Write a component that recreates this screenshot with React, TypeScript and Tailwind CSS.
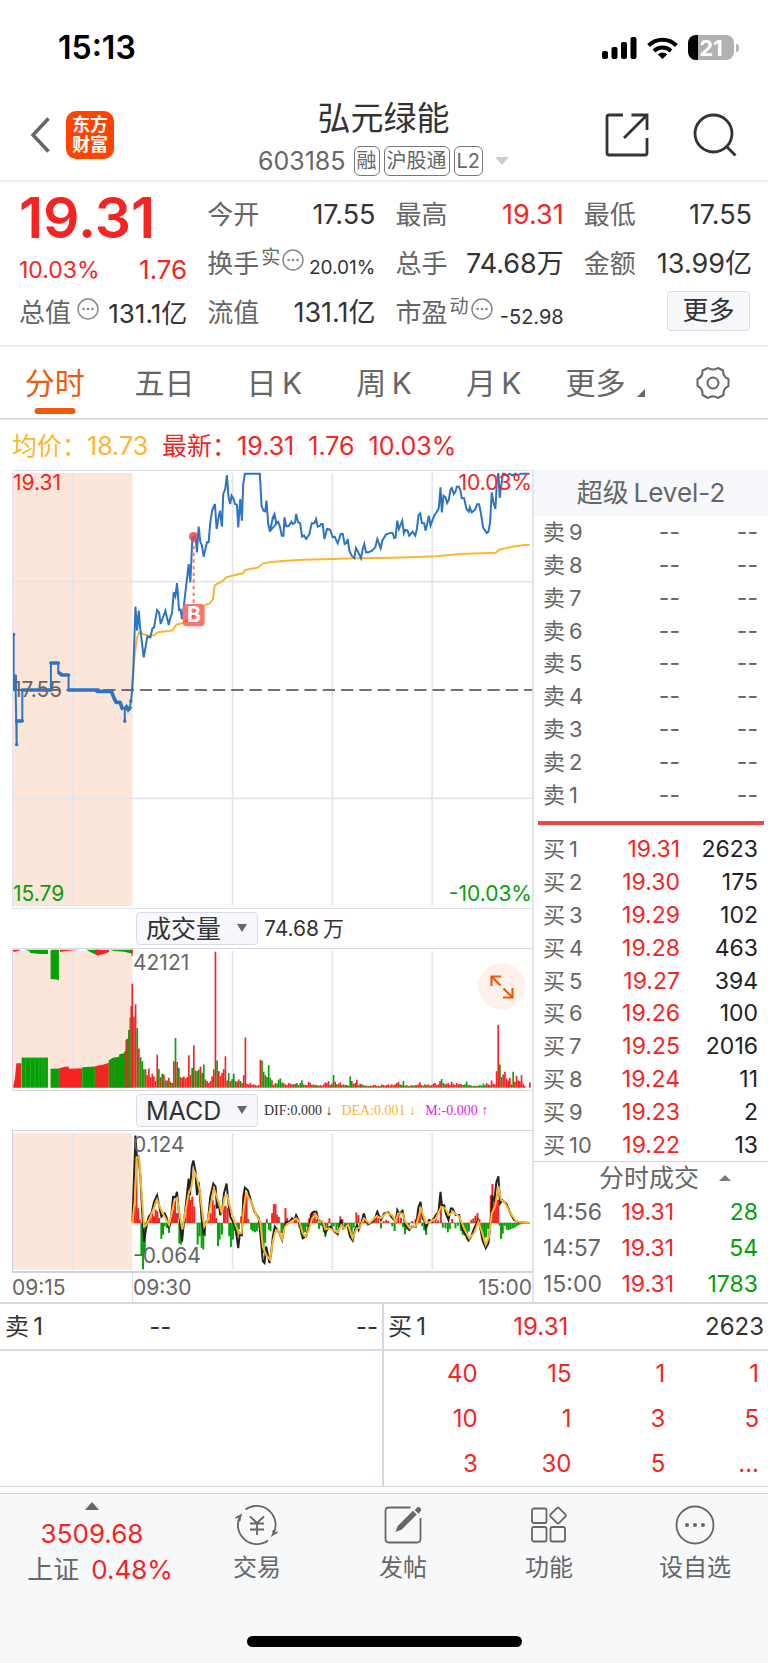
import type { ReactNode } from "react";
import clsx from "clsx";

const stats = [
  { label: "今开", value: "17.55" },
  { label: "最高", value: "19.31", up: true },
  { label: "最低", value: "17.55" },
];

const tabs = ["分时", "五日", "日\u2009K", "周\u2009K", "月\u2009K"];

const sells = [9, 8, 7, 6, 5, 4, 3, 2, 1];

const buys = [
  ["19.31", "2623"],
  ["19.30", "175"],
  ["19.29", "102"],
  ["19.28", "463"],
  ["19.27", "394"],
  ["19.26", "100"],
  ["19.25", "2016"],
  ["19.24", "11"],
  ["19.23", "2"],
  ["19.22", "13"],
];

const ticks = [
  ["14:56", "19.31", "28"],
  ["14:57", "19.31", "54"],
  ["15:00", "19.31", "1783"],
];

const queue = [
  ["40", "15", "1", "1"],
  ["10", "1", "3", "5"],
  ["3", "30", "5", "..."],
];

// all charts share a 1560 unit wide canvas, three units to a pixel
const preOpenLine =
  "2,489 2,659 8,614 8,659 11,820 11,750 28,750 28,657 114,657 114,576 136,576 136,605 145,612 167,612 167,657 256,657 256,661 296,663 301,677 309,694 321,694 327,711 336,711 336,750 336,711 341,704 346,719 351,709 355,689 358,657";

const priceLine =
  "358,657 361,609 364,529 368,407 373,479 378,419 382,469 393,559 404,496 413,499 419,472 424,469 433,417 439,424 444,459 458,419 468,462 473,439 478,427 483,364 488,376 493,336 499,417 504,416 508,444 513,409 528,279 533,334 539,204 543,197 549,201 553,244 558,167 563,212 568,224 573,257 583,214 588,214 593,154 599,117 607,99 612,174 618,139 622,119 628,167 632,69 638,54 643,12 648,79 653,99 657,74 663,84 667,99 673,101 677,169 683,84 688,149 692,39 697,8 742,8 747,104 753,119 758,121 762,89 767,159 772,181 779,149 786,131 792,156 797,152 " +
  "771,182 776,164 781,139 786,129 791,154 797,152 802,166 808,194 813,194 816,139 821,166 828,166 837,152 841,159 848,154 851,129 857,154 863,156 869,197 875,194 881,204 891,189 898,157 906,157 911,144 916,167 923,164 926,159 931,159 936,204 944,174 953,176 961,199 967,197 976,217 985,189 991,189 997,219 1002,216 1006,204 1011,239 1018,254 1026,261 1031,231 1038,244 1046,262 1051,234 1056,219 1061,244 1069,244 1079,239 1089,229 1095,204 1105,232 1110,209 1121,191 1136,185 1141,186 1146,201 1150,199 1155,149 1160,174 1170,149 1175,187 1179,177 1186,179 1191,194 1201,182 1209,194 1214,174 1219,132 1224,127 1229,156 1236,157 1240,179 1245,159 1250,134 1255,164 1266,134 1278,116 1280,109 1285,49 1289,124 1294,74 1300,79 1305,96 1310,86 1315,56 1319,51 1325,69 1330,62 1334,47 1340,47 1345,59 1349,82 1356,82 1363,114 1370,122 1373,109 1379,124 1389,116 1395,100 1401,100 1406,124 1413,169 1424,186 1429,182 1434,154 1439,64 1444,94 1450,114 1455,24 1459,6 1463,81 1468,39 1473,8 1478,8 1485,14 1492,8 1501,13 1511,8 1518,13 1525,8 1553,8";

const averageLine =
  "358,657 361,609 366,549 373,499 379,484 391,489 406,494 426,492 434,484 446,482 478,479 491,461 511,456 526,447 541,434 551,414 566,406 591,397 601,384 606,344 616,337 629,331 641,319 658,314 691,307 698,297 736,290 751,277 771,274 811,270 871,266 961,264 1031,262 1141,260 1271,256 1291,254 1341,249 1451,245 1461,236 1501,227 1536,222 1553,222";

const difLine =
  "359,274 368,14 373,89 377,74 383,139 388,239 394,334 401,289 408,259 416,249 424,214 433,194 439,224 446,259 456,249 461,259 469,294 474,274 481,199 488,201 493,184 498,239 508,334 513,284 521,209 528,144 532,194 537,109 542,89 548,119 553,194 558,154 563,209 568,279 573,314 578,279 586,269 593,199 602,159 609,169 613,234 618,214 623,254 629,239 634,189 642,159 648,219 653,259 661,274 669,294 677,354 682,309 688,314 692,199 697,171 706,179 716,214 726,244 739,264 746,339 751,394 756,399 761,349 771,399 " +
  "776,369 781,319 787,289 795,299 801,309 809,329 815,289 821,274 831,274 839,264 846,269 851,254 858,269 864,294 871,324 881,319 889,289 898,249 904,244 912,244 918,269 929,274 939,309 946,294 954,289 966,304 976,312 986,269 993,294 1005,284 1013,319 1021,331 1028,299 1034,284 1039,299 1047,279 1055,249 1061,274 1071,281 1086,269 1095,244 1106,269 1116,249 1128,246 1141,264 1151,274 1155,239 1161,251 1171,241 1179,284 1191,299 1199,289 1211,289 1219,229 1225,214 1231,264 1236,269 1241,294 1251,269 1259,274 1271,254 1279,244 1285,184 1289,224 1296,224 1301,249 1309,269 1316,234 1321,234 1331,254 1341,254 1351,299 1361,314 1369,331 1377,319 1386,294 1398,269 1403,284 1411,329 1421,354 1429,339 1436,269 1441,199 1447,209 1453,154 1459,137 1464,219 1471,209 1483,219 1493,244 1506,269 1521,276 1553,278";

const deaLine =
  "359,277 366,209 372,79 379,79 386,179 394,289 401,284 411,264 423,234 433,207 443,234 453,254 469,284 476,254 485,209 493,202 501,254 509,297 517,249 528,189 536,169 544,121 553,144 561,179 568,239 575,289 586,269 594,224 604,174 611,194 619,219 628,249 636,199 644,194 651,224 659,254 669,284 679,309 687,309 694,229 701,189 716,214 731,254 743,274 751,349 761,374 773,389 " +
  "779,344 787,309 796,297 809,327 817,289 831,277 851,264 861,274 871,309 879,319 889,299 899,264 911,254 921,269 931,274 939,297 951,294 976,307 987,284 996,294 1007,284 1021,324 1033,294 1041,294 1055,264 1071,279 1093,257 1106,264 1123,247 1139,254 1151,274 1157,249 1171,249 1179,274 1193,294 1211,287 1226,234 1241,279 1256,274 1271,264 1287,229 1299,234 1311,254 1323,244 1341,259 1356,294 1371,324 1386,309 1399,274 1409,304 1421,344 1431,319 1439,249 1449,229 1459,167 1467,209 1477,214 1493,244 1511,271 1526,276 1553,278";

// [x, height], above zero is red and below is green
const macdBars = [
  [366, 50], [371, 200], [376, 45], [381, 10], [386, -100], [391, -140], [396, -90], [401, -15], [408, 6], [413, 15],
  [419, 30], [424, 20], [429, 40], [434, 35], [439, 15], [446, -48], [451, -35], [456, -10], [463, -15], [469, -30],
  [481, 40], [487, 68], [493, 30], [500, -62], [505, -65], [510, -25], [518, 15], [524, 60], [529, 85], [534, 70],
  [539, 80], [545, 50], [555, -65], [561, -40], [567, -75], [572, -80], [577, -40], [588, 10], [594, 30], [600, 70],
  [606, 55], [611, 15], [616, -70], [621, -50], [628, -35], [634, 50], [639, 52], [645, 45], [650, -40], [655, -72],
  [661, -50], [667, -25], [673, -38], [679, -20], [686, 20], [692, 50], [697, 90], [702, 82], [707, 12], [716, -20],
  [721, -25], [727, -28], [733, -25], [741, -15], [747, -50], [753, -90], [758, -60], [763, 12], [769, -20], [774, -24],
  [779, 30], [784, 57], [789, 57], [794, 25], [799, 18], [807, -30], [812, -20], [819, 45], [824, 15], [831, 6],
  [846, 12], [851, 18], [861, -14], [867, -36], [872, -42], [878, -28], [884, -12], [890, 14], [895, 28], [901, 34],
  [907, 28], [913, 10], [920, -18], [926, -8], [934, -28], [939, -42], [945, -14], [951, 14], [958, -14], [964, -10],
  [972, -22], [978, -12], [984, 20], [990, 12], [998, -14], [1005, -8], [1012, -34], [1018, -38], [1024, -14], [1032, 32],
  [1038, 24], [1044, -8], [1052, 26], [1058, 18], [1066, -8], [1078, 4], [1086, 16], [1092, 26], [1098, 14], [1106, -16],
  [1114, 6], [1122, 10], [1128, 6], [1140, -10], [1147, -24], [1153, 24], [1158, 34], [1166, 16], [1172, -12], [1178, -34],
  [1184, -20], [1190, -12], [1200, 6], [1210, 12], [1217, 40], [1223, 30], [1230, -10], [1236, -22], [1242, -36], [1250, 10],
  [1262, 14], [1270, 16], [1278, 8], [1286, 62], [1292, -14], [1300, -16], [1307, -28], [1313, -18], [1320, 12], [1330, -16],
  [1338, -8], [1346, -24], [1352, -36], [1358, -38], [1364, -50], [1370, -26], [1378, 10], [1384, 14], [1390, 22], [1396, 30],
  [1402, 12], [1410, -30], [1416, -50], [1422, -44], [1428, -18], [1436, 84], [1441, 118], [1446, 80], [1452, 84], [1458, 70],
  [1463, -8], [1467, -48], [1472, -32], [1478, -8], [1484, -20], [1490, -22], [1496, -18], [1502, -16], [1508, -14], [1514, -10],
  [1520, -6], [1528, -4],
];

// one bar per minute, negative values are drawn green
const volumes = [
  314, 215, 252, -180, 118, -92, -80, -56, 56, 38, 58, 32, 42, 34, 20, 100, -56, 32, -42, 40, 22, -22, 30, -18, 14, 80,
  -150, 78, -60, 32, 30, 34, 28, 32, 98, 38, -60, 128, 52, -50, -55, 64, -45, -70, 25, 20, 14, 20, 34, 55, 411, -82, 50,
  35, 45, 56, 95, 22, -44, 20, -26, -42, -20, 18, 25, -20, 14, 38, 152, 12, 10, 14, 8, 10, 8, 6, 8, 84, -82, -48, 38,
  -32, -68, -30, 22, 8, 14, -12, -24, -28, 16, -14, 10, 8, 14, 12, -10, 10, 12, -14, 8, -14, -22, 10, -8, 8, 18, 14, -8,
  10, -8, 8, -6, 8, 6, 10, 16, 14, 20, -8, 12, -38, 18, -10, 12, 16, -8, 10, -8, 8, -6, -34, 20, -12, 14, 24, -8, 12,
  -10, 8, -6, 6, -5, 6, 5, 8, 8, 5, 6, -5, 10, 8, 6, 8, 10, 6, 10, 8, 10, 14, 18, -10, 8, -20, -6, 8, -5, 6, -8, 6, -8,
  8, 10, 16, -8, 6, -10, 8, 10, -6, 8, 12, 14, 8, 10, 20, -26, 14, -10, 12, 14, 8, 18, 12, 8, 14, 10, 12, -10, 8, -10,
  -18, 8, -8, 6, -5, -6, 5, -6, -8, -6, -12, -8, 14, 10, -8, 22, 12, 10, 50, 190, -70, 32, 40, 48, 28, 22, 30, 10, -48,
  18, 36, 22, 20, 38, 12, 5, 0, 0, 16,
];

const preOpenVolume = [
  { color: "#f52423", points: "1,419 1,412 6,390 10,345 25,345 25,419" },
  { color: "#04a007", points: "26,419 26,328 105,328 105,419" },
  { color: "#04a007", points: "113,419 113,362 138,361 138,419" },
  { color: "#f52423", points: "138,419 138,361 155,356 168,355 168,362 208,360 208,419" },
  { color: "#04a007", points: "208,419 208,357 246,355 246,419" },
  { color: "#f52423", points: "246,419 246,354 270,350 288,344 288,419" },
  { color: "#04a007", points: "288,419 288,336 302,328 318,326 320,318 332,316 338,306 338,275 346,270 346,245 350,245 350,209 354,205 354,419" },
  { color: "#f52423", points: "340,419 340,276 344,276 344,419" },
  { color: "#f52423", points: "353,419 353,174 358,170 358,419" },
];

const preOpenTop = [
  { color: "#f52423", points: "1,2 1,9 16,6 24,2" },
  { color: "#04a007", points: "34,2 50,7 52,12 80,15 105,15 105,2" },
  { color: "#04a007", points: "113,2 113,91 132,92 138,95 138,2" },
  { color: "#f52423", points: "141,2 141,9 160,6 185,4 200,2" },
  { color: "#04a007", points: "220,2 232,9 250,17 258,21 258,2" },
  { color: "#f52423", points: "248,2 248,16 258,19 280,13 288,9 290,2" },
  { color: "#04a007", points: "290,2 305,6 335,8 352,13 358,12 358,2" },
  { color: "#f52423", points: "353,2 355,12 357,22 359,22 361,2" },
];

function ChartCanvas({ height, children }: { height: number; children: ReactNode }) {
  return (
    <svg
      className="block h-full w-full"
      viewBox={`0 0 1560 ${height}`}
      preserveAspectRatio="none"
      aria-hidden="true"
    >
      {children}
    </svg>
  );
}

function Grid({ top, bottom }: { top: number; bottom: number }) {
  return (
    <>
      {[180, 660, 960, 1260].map((x) => (
        <line key={x} x1={x} x2={x} y1={top} y2={bottom} stroke="#e2e5ec" strokeWidth="5" />
      ))}
    </>
  );
}

function PriceChart() {
  return (
    <div className="relative h-[439px] border-y border-l border-[#dfe2ea] text-[21px] leading-6">
      <ChartCanvas height={1311}>
        <rect x="0" y="6" width="359" height="1299" fill="#fce6da" />
        <Grid top={6} bottom={1305} />
        <line x1="0" x2="1560" y1="332" y2="332" stroke="#e2e5ec" strokeWidth="5" />
        <line x1="0" x2="1560" y1="982" y2="982" stroke="#e2e5ec" strokeWidth="5" />
        <line x1="-4" x2="1560" y1="657" y2="657" stroke="#444" strokeWidth="4" strokeDasharray="37 18" />
        <polyline points={averageLine} fill="none" stroke="#fdb52d" strokeWidth="6" />
        <polyline points={preOpenLine} fill="none" stroke="#2e74c4" strokeWidth="6" />
        <path
          d="M28 657H114M114 576H136M139 606L147 612H167M167 657H256M252 661H296L303 680L310 694H322L328 712M341 708L346 716L352 710"
          fill="none"
          stroke="#2e74c4"
          strokeWidth="11"
          strokeLinecap="round"
          strokeLinejoin="round"
        />
        <path
          d="M11 750H28M11 820v1M336 750v1M7 615v40M2 490v1M354 690v1M358 657v1"
          stroke="#2e74c4"
          strokeWidth="10"
          strokeLinecap="round"
        />
        <polyline points={priceLine} fill="none" stroke="#2e74c4" strokeWidth="6" />
        <line x1="543" x2="543" y1="205" y2="398" stroke="#fb7468" strokeWidth="6" strokeDasharray="10 10" />
        <circle cx="543" cy="197" r="14" fill="#e0474c" fillOpacity="0.85" />
        <rect x="510" y="399" width="66" height="67" rx="12" fill="#ff7368" />
        <path d="M516 452L530 446L543 434L551 416L560 410" fill="none" stroke="#fb5224" strokeWidth="6" />
      </ChartCanvas>
      <span className="absolute top-[132px] left-[181px] -translate-x-1/2 font-bold text-white">B</span>
      <span className="absolute top-0 left-0 text-[#f52423]">19.31</span>
      <span className="absolute top-0 right-0 text-[#f52423]">10.03%</span>
      <span className="absolute top-[207px] left-0 text-[#666]">17.55</span>
      <span className="absolute bottom-0.5 left-0 text-[#04a007]">15.79</span>
      <span className="absolute right-0 bottom-0.5 text-[#04a007]">-10.03%</span>
    </div>
  );
}

function VolumeChart() {
  return (
    <div className="relative h-[143px] border-y border-l border-[#d5d8e0]">
      <ChartCanvas height={426}>
        <rect x="0" y="6" width="359" height="413" fill="#fce6da" />
        <Grid top={6} bottom={419} />
        {preOpenTop.map((area) => (
          <polygon key={area.points} points={area.points} fill={area.color} />
        ))}
        {preOpenVolume.map((area) => (
          <polygon key={area.points} points={area.points} fill={area.color} />
        ))}
        <path
          d="M38 330v89M52 330v89M66 330v89M78 330v89M88 330v89M96 330v89"
          stroke="#7cc45e"
          strokeWidth="1"
        />
        <path d="M248 358v61M256 358v61M306 334v85M320 322v97M334 318v101" stroke="#b0521c" strokeWidth="2" />
        {volumes.map((volume, i) => (
          <rect
            key={i}
            x={356 + i * 5}
            y={419 - Math.abs(volume)}
            width="5"
            height={Math.abs(volume)}
            fill={volume > 0 ? "#f52423" : "#04a007"}
          />
        ))}
      </ChartCanvas>
      <span className="absolute top-0.5 left-[120px] text-[21px] leading-6 text-[#666]">42121</span>
      <button
        className="absolute top-[14px] right-[7px] flex size-[47px] items-center justify-center rounded-full bg-[#fef1eb]"
        aria-label="放大"
      >
        <svg className="size-6" viewBox="0 0 24 24" fill="none" stroke="#ee5a0a" strokeWidth="2.2">
          <path d="M11 1.5H1.5V11M1.5 1.5L10.5 10.5M13 22.5H22.5V13M22.5 22.5L13.5 13.5" />
        </svg>
      </button>
    </div>
  );
}

function MacdChart() {
  return (
    <div className="relative h-[143px] border-t border-b-2 border-l border-[#d0d3da] text-[21px] leading-6 text-[#666]">
      <ChartCanvas height={423}>
        <rect x="0" y="6" width="359" height="413" fill="#fce6da" />
        <Grid top={6} bottom={419} />
        {macdBars.map(([x, h]) => (
          <rect
            key={x}
            x={x - 3}
            y={h > 0 ? 278 - h : 278}
            width="6"
            height={Math.abs(h)}
            fill={h > 0 ? "#f52423" : "#04a007"}
          />
        ))}
        <path d="M359 278H1530" stroke="#d33a1c" strokeWidth="2" strokeDasharray="30 22" />
        <path d="M389 278H1530" stroke="#04a007" strokeWidth="2" strokeDasharray="22 30" />
        <polyline points={difLine} fill="none" stroke="#222" strokeWidth="6" />
        <polyline points={deaLine} fill="none" stroke="#fdb52d" strokeWidth="6" />
      </ChartCanvas>
      <span className="absolute top-0.5 left-[120px]">0.124</span>
      <span className="absolute bottom-[3px] left-[120px]">-0.064</span>
    </div>
  );
}

function IndicatorSelect({ label, value }: { label: string; value: string }) {
  return (
    <div className="relative ml-[124px] w-[122px] shrink-0">
      <select
        aria-label={label}
        className="block h-[33px] w-full appearance-none rounded-sm border border-[#d9dce4] bg-[#f7f8fb] pl-[9px] text-[25px] leading-7 text-[#333]"
      >
        <option>{value}</option>
      </select>
      <svg className="pointer-events-none absolute top-3 right-[11px] h-2 w-[10px]" viewBox="0 0 10 8" fill="#666">
        <path d="M0 0h10L5 8z" />
      </svg>
    </div>
  );
}

function InfoDots() {
  return (
    <svg className="size-[22px] shrink-0" viewBox="0 0 22 22" fill="none" stroke="#888" strokeWidth="1.5">
      <circle cx="11" cy="11" r="10" />
      <g fill="#888" stroke="none">
        <circle cx="6.5" cy="11" r="1.3" />
        <circle cx="11" cy="11" r="1.3" />
        <circle cx="15.5" cy="11" r="1.3" />
      </g>
    </svg>
  );
}

function StatusBar() {
  return (
    <div className="flex h-[75px] items-center justify-between pt-5 pr-[29px] pl-[58px]">
      <span className="text-[32px] leading-9 font-semibold text-black">15:13</span>
      <div className="flex items-center gap-[10px]">
        <svg className="h-[23px] w-9" viewBox="0 0 36 23">
          <rect x="1" y="15" width="6" height="8" rx="2" />
          <rect x="10.5" y="11" width="6" height="12" rx="2" />
          <rect x="20" y="6" width="6" height="17" rx="2" />
          <rect x="29.5" y="1" width="6" height="22" rx="2" />
        </svg>
        <svg className="h-[23px] w-[31px]" viewBox="0 0 31 23" fill="none" stroke="#000" strokeWidth="4">
          <path d="M1.6 9.5A19.5 19.5 0 0 1 29.4 9.5" />
          <path d="M7 15A12 12 0 0 1 24 15" />
          <path d="M10.8 18.5A6.5 6.5 0 0 1 20.2 18.5L15.5 23z" fill="#000" stroke="none" />
        </svg>
        <div className="flex items-center gap-0.5">
          <div className="flex h-[25px] w-[46px] items-center justify-center rounded-lg bg-linear-to-r from-black from-22% to-[#b1b1b1] to-22% text-[22px] leading-6 font-bold text-white">
            21
          </div>
          <div className="h-2 w-[3px] rounded-r-full bg-[#b1b1b1]" />
        </div>
      </div>
    </div>
  );
}

function Header() {
  return (
    <header className="grid h-[107px] grid-cols-[1fr_auto_1fr] items-center border-b-2 border-[#ededee] pt-[14px] pr-[31px] pl-[30px]">
      <div className="flex items-center gap-4">
        <button aria-label="返回">
          <svg className="block h-9 w-5" viewBox="0 0 20 36" fill="none" stroke="#666" strokeWidth="3.5">
            <path d="M18.5 1.5L3 18L18.5 34.5" />
          </svg>
        </button>
        <a
          href="#"
          className="flex size-12 flex-col items-center justify-center rounded-[10px] bg-[#ff4400] text-lg leading-5 font-bold text-white"
        >
          <span>东方</span>
          <span>财富</span>
        </a>
      </div>
      <div className="flex flex-col items-center gap-[10px] pt-1.5">
        <h1 className="text-[33px] leading-9 text-[#333]">弘元绿能</h1>
        <div className="flex items-center text-[#666]">
          <span className="mr-2 text-[25px] leading-7">603185</span>
          <div className="flex gap-1 text-xl leading-7">
            <span className="rounded-md border border-[#777] px-0.5">融</span>
            <span className="rounded-md border border-[#777] px-0.5">沪股通</span>
            <span className="rounded-md border border-[#777] px-0.5">L2</span>
          </div>
          <svg className="ml-3 h-2 w-[14px]" viewBox="0 0 14 8" fill="#ccc">
            <path d="M0 0h14L7 8z" />
          </svg>
        </div>
      </div>
      <div className="flex items-center justify-end gap-11">
        <button aria-label="分享">
          <svg className="block size-11" viewBox="0 0 44 44" fill="none" stroke="#333" strokeWidth="2.8">
            <path d="M18 2H4Q2 2 2 4V40Q2 42 4 42H40Q42 42 42 40V25M26.5 2H42V17M42 2L19 25" />
          </svg>
        </button>
        <button aria-label="搜索">
          <svg className="block size-11" viewBox="0 0 44 44" fill="none" stroke="#333" strokeWidth="2.8">
            <circle cx="20.5" cy="20.5" r="18.5" />
            <path d="M33 33L42.5 42.5" />
          </svg>
        </button>
      </div>
    </header>
  );
}

function Stat({ label, value, up }: { label: string; value: string; up?: boolean }) {
  return (
    <div className="flex items-center justify-between">
      <span>{label}</span>
      <span className={clsx("text-[27px]", up ? "text-[#f52423]" : "text-[#333]")}>{value}</span>
    </div>
  );
}

function Quote() {
  return (
    <section className="grid auto-rows-[49px] grid-cols-4 gap-x-5 border-b-2 border-[#ebecee] pt-2 pr-4 pb-2 pl-[19px] text-[26px] leading-8 whitespace-nowrap text-[#666]">
      <p className="flex items-center pt-1.5 text-[57px] leading-none font-semibold text-[#f52423]">19.31</p>
      {stats.map((stat) => (
        <Stat key={stat.label} {...stat} />
      ))}

      <div className="flex items-center justify-between pt-3 text-[#f52423]">
        <span className="text-[23px]">10.03%</span>
        <span>1.76</span>
      </div>
      <div className="flex items-center justify-between">
        <span className="flex items-center gap-0.5">
          换手
          <span className="pb-3 text-[19px] leading-6">实</span>
          <span className="pb-2">
            <InfoDots />
          </span>
        </span>
        <span className="pt-2 text-[19px] text-[#333]">20.01%</span>
      </div>
      <Stat label="总手" value="74.68万" />
      <Stat label="金额" value="13.99亿" />

      <div className="flex items-center justify-between">
        <span className="flex items-center gap-1.5">
          总值
          <span className="pb-2">
            <InfoDots />
          </span>
        </span>
        <span className="pt-0.5 text-[#333]">131.1亿</span>
      </div>
      <Stat label="流值" value="131.1亿" />
      <div className="flex items-center justify-between">
        <span className="flex items-center gap-0.5">
          市盈
          <span className="pb-3 text-[19px] leading-6">动</span>
          <span className="pb-2">
            <InfoDots />
          </span>
        </span>
        <span className="pt-2 text-xl text-[#333]">-52.98</span>
      </div>
      <div className="flex items-start justify-end pt-[3px] pr-0.5">
        <button className="h-10 w-[83px] rounded-sm border border-[#dcdfe6] bg-[#f7f8fb] text-[#333]">更多</button>
      </div>
    </section>
  );
}

function Tabs() {
  return (
    <nav className="grid h-[73px] grid-cols-7 border-b-2 border-[#d9dce2] text-[30px] leading-10 text-[#666]">
      {tabs.map((tab, i) => (
        <button key={tab} className={clsx("relative", i === 0 && "text-[#ee5a0a]")}>
          {tab}
          {i === 0 && <span className="absolute bottom-1 left-1/2 h-1.5 w-[41px] -translate-x-1/2 rounded-sm bg-[#ee5a0a]" />}
        </button>
      ))}
      <button className="flex items-center justify-center gap-3 pl-1">
        更多
        <svg className="mt-5 size-2" viewBox="0 0 8 8" fill="#666">
          <path d="M8 0V8H0z" />
        </svg>
      </button>
      <button className="flex items-center justify-center" aria-label="设置">
        <svg className="size-[34px]" viewBox="0 0 34 34" fill="none" stroke="#666" strokeWidth="2">
          <path
            strokeLinejoin="round"
            d="M12 2Q17 5 22 2L27 4.5Q27 11 32.5 13V20Q27 22.5 27.5 29L22 32Q17 28.5 12 32L6.5 29Q7 22.5 1.5 20V13Q7 11 6.5 4.5Z"
          />
          <circle cx="17" cy="17" r="5.5" />
        </svg>
      </button>
    </nav>
  );
}

function Charts() {
  return (
    <div className="flex min-w-0 flex-1 flex-col border-r-2 border-[#e2e5ec] pl-3">
      <PriceChart />
      <div className="flex h-[39px] items-center">
        <IndicatorSelect label="成交量指标" value="成交量" />
        <span className="ml-1.5 text-[21px] leading-6 text-[#333]">74.68{"\u2009"}万</span>
      </div>
      <VolumeChart />
      <div className="flex h-[39px] items-center">
        <IndicatorSelect label="技术指标" value="MACD" />
        <div className="ml-1.5 flex gap-[9px] font-['Liberation_Serif','DejaVu_Sans',serif] text-sm leading-5 whitespace-nowrap">
          <span className="text-[#333]">DIF:0.000 ↓</span>
          <span className="text-[#fdb52d]">DEA:0.001 ↓</span>
          <span className="text-[#e022e0]">M:-0.000 ↑</span>
        </div>
      </div>
      <MacdChart />
      <div className="flex h-[29px] items-center text-[21px] leading-6 text-[#666]">
        <span className="w-[120px]">09:15</span>
        <span className="flex flex-1 items-center self-stretch border-l border-[#dfe2ea]">09:30</span>
        <span>15:00</span>
      </div>
    </div>
  );
}

function OrderBook() {
  return (
    <aside className="flex w-[234px] shrink-0 flex-col text-[23px] leading-8 text-[#666]">
      <h2 className="bg-[#f7f8fb] text-center text-[26px] leading-[46px]">超级{"\u2009"}Level-2</h2>
      <table className="h-[295px] w-full table-fixed">
        <tbody>
          {sells.map((level) => (
            <tr key={level}>
              <th className="w-[66px] pl-[9px] text-left text-[22px] font-normal whitespace-nowrap">
                卖{"\u2009"}
                {level}
              </th>
              <td className="text-right">--</td>
              <td className="w-[88px] pr-[10px] text-right">--</td>
            </tr>
          ))}
        </tbody>
      </table>
      <div className="mx-1 mt-[10px] mb-2 h-1 bg-[#ea4648]" />
      <table className="h-[328px] w-full table-fixed">
        <tbody>
          {buys.map(([price, volume], i) => (
            <tr key={price}>
              <th className="w-[66px] pl-[9px] text-left text-[22px] font-normal whitespace-nowrap">
                买{"\u2009"}
                {i + 1}
              </th>
              <td className="text-right text-[#f52423]">{price}</td>
              <td className="w-[88px] pr-[10px] text-right text-[#222]">{volume}</td>
            </tr>
          ))}
        </tbody>
      </table>
      <button className="flex items-center justify-center gap-5 border-t border-[#d0d3da] pl-7 text-[25px] leading-8">
        分时成交
        <svg className="h-1.5 w-3" viewBox="0 0 12 6" fill="#777">
          <path d="M0 6L6 0L12 6z" />
        </svg>
      </button>
      <table className="w-full table-fixed leading-9">
        <tbody>
          {ticks.map(([time, price, volume]) => (
            <tr key={time}>
              <th className="w-[76px] pl-[9px] text-left font-normal">{time}</th>
              <td className="text-right text-[#f52423]">{price}</td>
              <td className="w-[94px] pr-[10px] text-right text-[#04a007]">{volume}</td>
            </tr>
          ))}
        </tbody>
      </table>
    </aside>
  );
}

function Queue() {
  return (
    <section className="grid grid-cols-2 border-t-2 border-b border-[#d5d8e0] text-2xl leading-[45px] text-[#333]">
      <div className="border-r-2 border-[#d5d8e0]">
        <div className="grid grid-cols-3 border-b-2 border-[#d5d8e0] pr-1 pl-[5px]">
          <span>卖{"\u2009"}1</span>
          <span className="pl-5">--</span>
          <span className="text-right">--</span>
        </div>
      </div>
      <div>
        <div className="grid grid-cols-3 border-b-2 border-[#d5d8e0] px-1">
          <span>买{"\u2009"}1</span>
          <span className="text-[#f52423]">19.31</span>
          <span className="text-right">2623</span>
        </div>
        <div className="pr-[9px]">
          <table className="w-full table-fixed text-right text-[#f52423]">
            <tbody>
              {queue.map((row) => (
                <tr key={row.join()}>
                  {row.map((cell, i) => (
                    <td key={i}>{cell}</td>
                  ))}
                </tr>
              ))}
            </tbody>
          </table>
        </div>
      </div>
    </section>
  );
}

function NavItem({ label, children }: { label: string; children: ReactNode }) {
  return (
    <a href="#" className="flex flex-1 flex-col items-center gap-[5px] pt-[9px]">
      <svg className="size-11" viewBox="0 0 44 44" fill="none" stroke="#666" strokeWidth="1.8">
        {children}
      </svg>
      <span>{label}</span>
    </a>
  );
}

function BottomNav() {
  return (
    <footer className="mt-1.5 border-t border-[#d0d3da] bg-[#f7f8fa] pb-4">
      <nav className="flex h-[142px] text-2xl leading-8 text-[#666]">
        <a href="#" className="flex w-[184px] flex-col items-center pt-2 text-[26px]">
          <svg className="h-2 w-[14px]" viewBox="0 0 14 8" fill="#666">
            <path d="M0 8L7 0L14 8z" />
          </svg>
          <span className="mt-2 text-[#f52423]">3509.68</span>
          <span className="mt-1 flex items-baseline gap-3 pl-4">
            上证 <span className="text-[#f52423]">0.48%</span>
          </span>
        </a>
        <NavItem label="交易">
          <path d="M10.5 6.5A19 19 0 0 1 38 31.5L42.5 29M38 31.5L38.5 27" />
          <path d="M33 37.5A19 19 0 0 1 5.5 12.5L0.5 15M5.5 12.5L4.5 18" />
          <path d="M15 13.5L22 20L29 13.5M22 20V32M15 20.5H29M15 26.5H29" />
        </NavItem>
        <NavItem label="发帖">
          <path d="M29.5 4.5H8Q4.5 4.5 4.5 8V36Q4.5 39.5 8 39.5H36Q39.5 39.5 39.5 36V15" />
          <path d="M16 27.5L20 26L34.5 11.5L32 9L17.5 23.5ZM35 7L37.5 9.5L39 7.5Q39.5 5 37 5Z" fill="#666" />
        </NavItem>
        <NavItem label="功能">
          <rect x="5" y="5.5" width="14.5" height="14.5" rx="2" />
          <rect x="5" y="24" width="14.5" height="14.5" rx="2" />
          <rect x="23.5" y="24" width="14.5" height="14.5" rx="2" />
          <rect x="25" y="6.5" width="12" height="12" rx="1.5" transform="rotate(45 31 12.5)" />
        </NavItem>
        <NavItem label="设自选">
          <circle cx="22" cy="22" r="18.5" />
          <g fill="#666" stroke="none">
            <circle cx="14" cy="22" r="2" />
            <circle cx="22" cy="22" r="2" />
            <circle cx="30" cy="22" r="2" />
          </g>
        </NavItem>
      </nav>
      <div className="mx-auto h-[11px] w-[275px] rounded-full bg-black" />
    </footer>
  );
}

export default function App() {
  return (
    <div className="min-h-screen bg-white font-['Inter','Noto_Sans_CJK_SC',sans-serif]">
      <StatusBar />
      <Header />
      <Quote />
      <Tabs />
      <div className="flex h-[50px] items-center gap-[14px] pt-0.5 pl-3 text-[25px] leading-8 text-[#f52423]">
        <span className="text-[#fdb52d]">均价：18.73</span>
        <span>最新：19.31</span>
        <span>1.76</span>
        <span>10.03%</span>
      </div>
      <div className="flex">
        <Charts />
        <OrderBook />
      </div>
      <Queue />
      <BottomNav />
    </div>
  );
}
